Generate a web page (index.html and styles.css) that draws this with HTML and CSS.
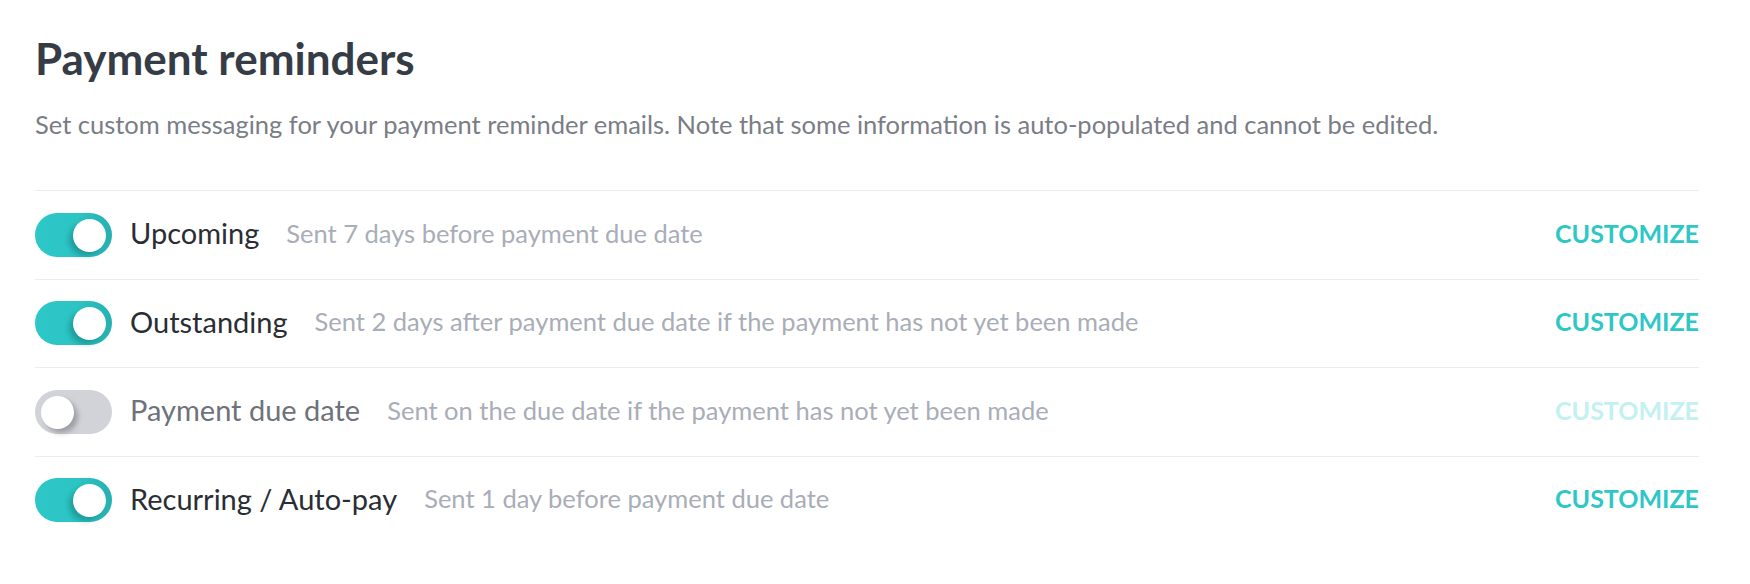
FILE: index.html
```html
<!DOCTYPE html>
<html lang="en">
<head>
  <meta charset="UTF-8">
  <meta name="viewport" content="width=device-width, initial-scale=1.0">
  <title>Payment reminders</title>
  <link rel="stylesheet" href="styles.css">
</head>
<body>
  <div class="container">
    <h1>Payment reminders</h1>
    <p class="intro">Set custom messaging for your payment reminder emails. Note that some information is auto-populated and cannot be edited.</p>

    <div class="reminder-list">
      <div class="reminder-row">
        <span class="toggle is-on"><span class="knob"></span></span>
        <span class="reminder-name">Upcoming</span>
        <span class="reminder-desc">Sent 7 days before payment due date</span>
        <a class="customize-link" href="#">Customize</a>
      </div>
      <div class="reminder-row">
        <span class="toggle is-on"><span class="knob"></span></span>
        <span class="reminder-name">Outstanding</span>
        <span class="reminder-desc">Sent 2 days after payment due date if the payment has not yet been made</span>
        <a class="customize-link" href="#">Customize</a>
      </div>
      <div class="reminder-row is-disabled">
        <span class="toggle"><span class="knob"></span></span>
        <span class="reminder-name">Payment due date</span>
        <span class="reminder-desc">Sent on the due date if the payment has not yet been made</span>
        <a class="customize-link" href="#">Customize</a>
      </div>
      <div class="reminder-row">
        <span class="toggle is-on"><span class="knob"></span></span>
        <span class="reminder-name">Recurring / Auto-pay</span>
        <span class="reminder-desc">Sent 1 day before payment due date</span>
        <a class="customize-link" href="#">Customize</a>
      </div>
    </div>
  </div>
</body>
</html>
```

FILE: styles.css
```css
body {
  font-family: Lato, "Open Sans", sans-serif;
  background-color: #fff;
  margin: 0;
  padding: 0;
}

.container {
  width: 1664px;
  padding: 32px 0 0 35px;
}

h1 {
  color: #363c46;
  font-size: 44px;
  line-height: 52px;
  font-weight: 700;
  margin: 0;
}

.intro {
  color: #7a7d86;
  font-size: 25.5px;
  line-height: 32px;
  margin: 24px 0 50px 0;
}

.reminder-row {
  display: flex;
  align-items: center;
  height: 88.5px;
  box-sizing: border-box;
  border-top: 1px solid #ededee;
}

.toggle {
  position: relative;
  width: 77px;
  height: 44px;
  border-radius: 22px;
  background-color: #d2d3d8;
  flex-shrink: 0;
}

.toggle.is-on {
  background: linear-gradient(90deg, #2ec7c7 0%, #2cc4c4 55%, #27b0b0 100%);
}

.knob {
  position: absolute;
  top: 6px;
  left: 6px;
  width: 33px;
  height: 33px;
  border-radius: 50%;
  background-color: #fff;
  box-shadow: 4px 4px 5px rgba(60, 62, 70, 0.35);
}

.toggle.is-on .knob {
  left: auto;
  right: 6px;
  box-shadow: -4px 4px 5px rgba(10, 90, 90, 0.35);
}

.reminder-name,
.reminder-desc,
.customize-link {
  padding-bottom: 4px;
}

.reminder-name {
  margin-left: 18px;
  font-size: 29px;
  color: #2a2d33;
}

.reminder-desc {
  margin-left: 27px;
  font-size: 25.5px;
  color: #a9adb7;
}

.customize-link {
  margin-left: auto;
  font-size: 25px;
  font-weight: 700;
  text-transform: uppercase;
  text-decoration: none;
  color: #2ec7c7;
}

.is-disabled .reminder-name {
  color: #6e727a;
}

.is-disabled .customize-link {
  color: #c3f0f0;
}
```
